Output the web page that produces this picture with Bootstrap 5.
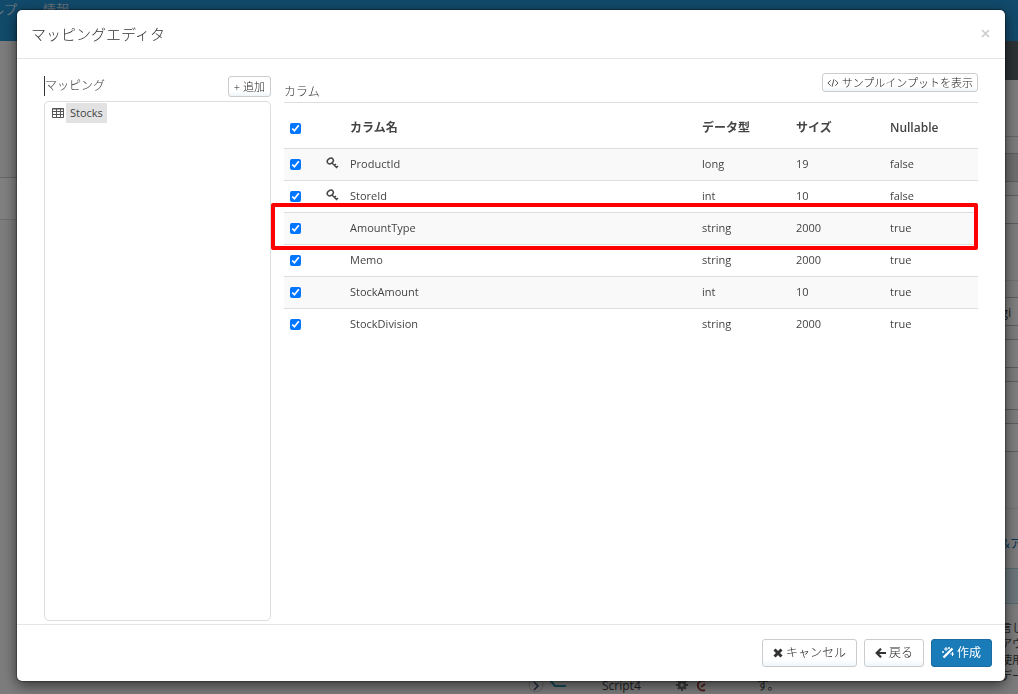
<!DOCTYPE html>
<html lang="ja">
<head>
<meta charset="utf-8">
<meta name="viewport" content="width=device-width, initial-scale=1">
<title>マッピングエディタ</title>
<link href="https://cdn.jsdelivr.net/npm/bootstrap@5.3.0/dist/css/bootstrap.min.css" rel="stylesheet">
<style>
  body { font-family: "Open Sans", "Noto Sans CJK JP", sans-serif; font-size: 12px; line-height: 16px; color: #444; background: #fff; }
  svg { display: block; flex: none; }

  /* Page behind the dialog */
  .page-back { height: 100vh; overflow: hidden; }
  .top-bar { height: 41px; background: #2494d6; box-shadow: 0 1px 4px #888; flex: none; padding-top: 1px; gap: 26px; }
  .top-bar a { color: #fff; text-decoration: none; font-size: 13px; font-weight: 300; }
  .top-bar a:first-child { margin-left: -9px; }
  .strip-left { width: 17px; }
  .strip-left .blank { height: 137px; border-bottom: 1px solid #ccc; }
  .strip-left .tool { height: 42px; background: #fff; border-bottom: 1px solid #ddd; }
  .strip-left, .strip-right, .page-mid { background: #f8f8f8; }
  .strip-right { width: 17px; white-space: nowrap; font-size: 11px; }
  .strip-right .dark { height: 39px; background: #5a656d; }
  .strip-right .head { height: 57px; border-bottom: 1px solid #ccc; margin-bottom: 16px; }
  .field { height: 29px; border: solid #bbb; border-width: 1px 0; background: #fff; margin-bottom: 13px; line-height: 28px; font-size: 13px; }
  .field.off { background: #ddd; }
  .gap-big { margin-bottom: 56px; }
  .notice { height: 36px; background: #d9edf7; border: solid #a8d4e0; border-width: 1px 0; margin: 16px 0; }
  .topic { display: block; margin-top: 27px; text-decoration: none; font-size: 12px; color: #0a6cad; }
  .bottom-bar { height: 22px; padding-left: 511px; font-size: 12px; }

  /* Dialog */
  .editor-wrap { padding: 10px 13px 13px 17px; }
  .editor { min-height: 100%; border: 0; border-radius: 5px; color: #444; box-shadow: 0 4px 14px rgba(0,0,0,.6), 0 0 2px #000; }
  .modal-backdrop { opacity: .5; }
  .editor .modal-header { padding: 0 14px; height: 49px; border-color: #e5e5e5; }
  .editor .modal-title { font-size: 15px; line-height: 24px; color: #333; font-weight: 300; }
  .close-x { border: 0; background: none; padding: 0 0 2px; color: #ccc; }
  .editor .modal-body { padding: 14px 27px 3px; gap: 13px; }
  .side { flex: 0 0 227px; }
  .side-head { height: 28px; padding-top: 3px; }
  .side-head h2, .main-head h2 { font-size: 12px; line-height: 20px; font-weight: 300; margin: 0; color: #333; }
  .caret { border-left: 1px solid #333; }
  .tree { border: 1px solid #ddd; border-radius: 5px; padding: 1px 7px; }
  .tree-item { gap: 2px; }
  .tree-item button { border: 0; background: #e2e2e2; color: #444; padding: 2px 4px; font-size: 11px; line-height: 16px; }
  .main-head { height: 30px; border-bottom: 1px solid #ddd; }
  .main-head h2 { align-self: flex-end; }
  .btn-plain, .btn-tiny { border: 1px solid #ccc; color: #222; font-weight: 300; background: #fff linear-gradient(#fff 75%, #edf5fa); display: inline-flex; align-items: center; justify-content: center; }
  .btn-tiny { font-size: 11px; line-height: 17px; border-radius: 3px; padding: 0 4px; gap: 3px; }
  .btn-add { padding: 1px 5px; }
  .act { height: 28px; border-radius: 3px; font-size: 12px; line-height: 20px; padding: 0 10px; display: inline-flex; align-items: center; gap: 3px; }
  .btn-make { background: #1a7bb9; border-color: #1a6ca3; color: #fff; }
  .editor .modal-footer { padding: 0 13px; height: 57px; gap: 7px; border-color: #e5e5e5; }
  .editor .modal-footer > * { margin: 0; }

  .cols { table-layout: fixed; margin: 0; color: #444; --bs-table-color: #444; }
  .cols > :not(caption) > * > * { padding: 0 6px; height: 32px; border-bottom: 0; border-top: 1px solid #ddd; vertical-align: middle; background: none; box-shadow: none; color: #444; }
  .cols > tbody > tr > td { font-size: 11px; }
  .cols > thead > tr > th { height: 45px; border-top: 0; padding-top: 6px; font-weight: 600; }
  .cols > tbody > tr:nth-child(odd) { background: #f9f9f9; }
  .cols input { display: block; width: 11px; height: 11px; margin: 0; }
  .c-check { width: 36px; }
  .c-key { width: 24px; }
  .c-info { width: 94px; }
  .highlight { position: absolute; inset: -9px 0 -6px -13px; border: 4px solid #f00; border-radius: 2px; pointer-events: none; }
</style>
</head>
<body>
<div class="page-back d-flex flex-column">
  <nav class="top-bar d-flex"><a href="#">ルプ</a><a href="#">情報</a></nav>
  <div class="d-flex flex-grow-1 overflow-hidden">
    <div class="strip-left flex-shrink-0">
      <div class="blank"></div>
      <div class="tool"></div>
    </div>
    <div class="page-mid flex-grow-1 d-flex flex-column justify-content-end">
      <div class="bottom-bar d-flex align-items-end">
        <svg width="42" height="16" viewBox="0 0 42 16"><circle cx="8" cy="7" r="7" fill="none" stroke="#ccc"/><path d="M6 4l4 4-4 4" fill="none" stroke="#457" stroke-width="1.5"/><path d="M22 2l5 6h11" fill="none" stroke="#39b" stroke-width="2"/></svg>
        <span class="ms-4 me-4 ps-2">Script4</span>
        <svg class="ms-1" width="40" height="18" viewBox="0 0 40 18"><path d="M17 9h2M7 9h2M13 3v3M13 12v3M9 5l2 2M17 5l-2 2M9 13l2-2M17 13l-2-2" stroke="#777" stroke-width="2"/><circle cx="13" cy="9" r="3" fill="none" stroke="#777" stroke-width="2.500"/><path d="M36 5a5 5 0 100 9M32 11l4-3" fill="none" stroke="#a44" stroke-width="2"/></svg>
        <span class="ms-5">す。</span>
      </div>
    </div>
    <div class="strip-right flex-shrink-0">
      <div class="dark"></div>
      <div class="head"></div>
      <div class="field off"></div>
      <div class="field mb-0"></div>
      <div class="gap-big"></div>
      <div class="border-top mt-3"></div>
      <div class="field mt-3">gi</div>
      <div class="field"></div>
      <div class="field"></div>
      <div class="field gap-big"></div>
      <div class="border-top"></div>
      <a class="topic" href="#">&amp;ア</a>
      <div class="notice"></div>
      <div>言し<br>アウ<br>使用<br>デー</div>
    </div>
  </div>
</div>
<div class="modal-backdrop"></div>

<div class="modal d-block editor-wrap" tabindex="-1" role="dialog" aria-labelledby="editorTitle">
  <div class="modal-content editor">
    <div class="modal-header">
      <h1 class="modal-title" id="editorTitle">マッピングエディタ</h1>
      <button type="button" class="close-x" aria-label="閉じる"><svg width="11" height="11" viewBox="0 0 11 11"><path d="M2 2l7 7M9 2l-7 7" stroke="currentColor" stroke-width="1.700"/></svg></button>
    </div>
    <div class="modal-body d-flex">
      <section class="side d-flex flex-column">
        <div class="side-head d-flex justify-content-between align-items-start">
          <h2 class="caret">マッピング</h2>
          <button type="button" class="btn-tiny btn-add"><span>+ 追加</span></button>
        </div>
        <div class="tree flex-grow-1">
          <div class="tree-item d-flex align-items-center">
            <svg width="12" height="10" viewBox="0 0 12 10"><path d="M.5.5h11v9H.5zM.5 3.500h11M.5 6.500h11M4.500.5v9M8.500.5v9" fill="none" stroke="#555"/><path d="M0 1h12" stroke="#555"/></svg>
            <button type="button">Stocks</button>
          </div>
        </div>
      </section>
      <section class="flex-grow-1">
        <div class="main-head d-flex justify-content-between align-items-start">
          <h2>カラム</h2>
          <button type="button" class="btn-tiny"><svg width="12" height="10" viewBox="0 0 13 10"><path d="M4 2L1 5l3 3M9 2l3 3-3 3M7.500 1l-2 8" fill="none" stroke="#444"/></svg><span>サンプルインプットを表示</span></button>
        </div>
        <table class="table cols">
          <colgroup><col class="c-check"><col class="c-key"><col><col class="c-info"><col class="c-info"><col class="c-info"></colgroup>
          <thead>
            <tr><th><input type="checkbox" checked aria-label="すべて選択"></th><th></th><th>カラム名</th><th>データ型</th><th>サイズ</th><th>Nullable</th></tr>
          </thead>
          <tbody>
            <tr><td><input type="checkbox" checked aria-label="ProductId"></td><td><svg width="13" height="14" viewBox="0 0 13 14"><g fill="none" stroke="#444"><ellipse cx="4.300" cy="4" rx="3.200" ry="2.500" transform="rotate(-35 4.300 4)" stroke-width="1.500"/><path d="M6 6l5 5M8 9l2-2M10 11l2-2" stroke-width="1.300"/></g></svg></td><td>ProductId</td><td>long</td><td>19</td><td>false</td></tr>
            <tr><td><input type="checkbox" checked aria-label="StoreId"></td><td><svg width="13" height="14" viewBox="0 0 13 14"><g fill="none" stroke="#444"><ellipse cx="4.300" cy="4" rx="3.200" ry="2.500" transform="rotate(-35 4.300 4)" stroke-width="1.500"/><path d="M6 6l5 5M8 9l2-2M10 11l2-2" stroke-width="1.300"/></g></svg></td><td>StoreId</td><td>int</td><td>10</td><td>false</td></tr>
            <tr class="position-relative"><td><input type="checkbox" checked aria-label="AmountType"><span class="highlight"></span></td><td></td><td>AmountType</td><td>string</td><td>2000</td><td>true</td></tr>
            <tr><td><input type="checkbox" checked aria-label="Memo"></td><td></td><td>Memo</td><td>string</td><td>2000</td><td>true</td></tr>
            <tr><td><input type="checkbox" checked aria-label="StockAmount"></td><td></td><td>StockAmount</td><td>int</td><td>10</td><td>true</td></tr>
            <tr><td><input type="checkbox" checked aria-label="StockDivision"></td><td></td><td>StockDivision</td><td>string</td><td>2000</td><td>true</td></tr>
          </tbody>
        </table>
      </section>
    </div>
    <div class="modal-footer">
      <button type="button" class="btn-plain act"><svg width="10" height="10" viewBox="0 0 10 10"><path d="M1.500 1.500l7 7M8.500 1.500l-7 7" stroke="#333" stroke-width="3"/></svg>キャンセル</button>
      <button type="button" class="btn-plain act"><svg width="11" height="10" viewBox="0 0 11 10"><path d="M6 .7L1.700 5 6 9.300M2 5h9" fill="none" stroke="#333" stroke-width="2.200"/></svg>戻る</button>
      <button type="button" class="btn btn-make act"><svg width="12" height="12" viewBox="0 0 12 12"><path d="M1.500 10.500L10.500 1.500" stroke="#fff" stroke-width="2.400"/><path d="M4 0v4M2 2h4M1 4v2M0 5h2M10.500 5v4M8.500 7h4M7 0v2M6 1h2" stroke="#fff"/></svg>作成</button>
    </div>
  </div>
</div>
<script src="https://cdn.jsdelivr.net/npm/bootstrap@5.3.0/dist/js/bootstrap.bundle.min.js"></script>
</body>
</html>
